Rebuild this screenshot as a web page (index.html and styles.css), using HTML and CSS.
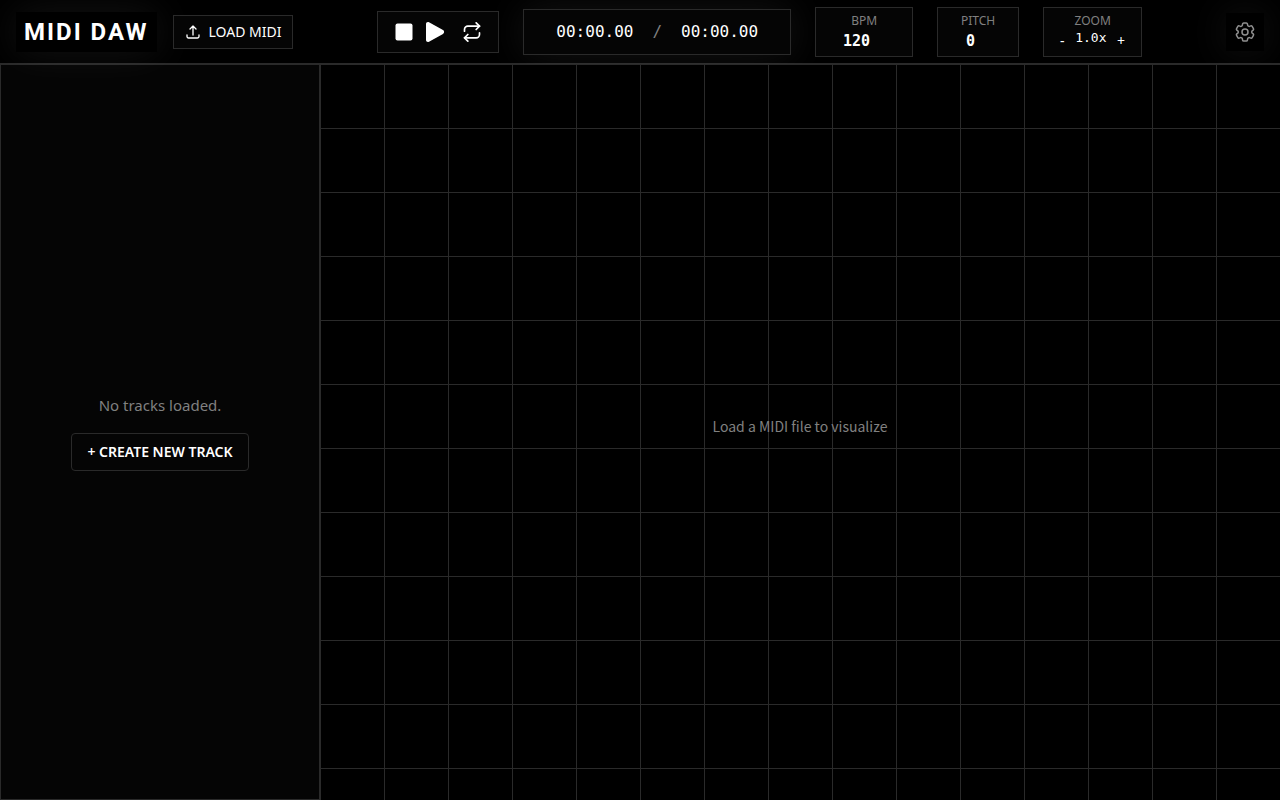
FILE: index.html
```html
<!DOCTYPE html>
<html lang="en">
<head>
	<meta charset="UTF-8">
	<meta name="viewport" content="width=device-width, initial-scale=1">
	<title>MIDI DAW</title>
	<link rel="stylesheet" href="styles.css">
</head>
<body>
<div class="app">
	<header class="header">
		<div class="header-left">
			<h1 class="logo">MIDI DAW</h1>
			<button type="button" class="load-btn">
				<svg class="icon-sm" viewBox="0 0 24 24"><path d="M3 16.5v2.25A2.25 2.25 0 0 0 5.25 21h13.5A2.25 2.25 0 0 0 21 18.75V16.5M7.5 7.5 12 3m0 0 4.5 4.5M12 3v13.5"/></svg>
				LOAD MIDI
			</button>
		</div>

		<div class="header-center">
			<!-- transport -->
			<div class="panel transport">
				<button type="button" class="stop" aria-label="Stop">
					<svg class="solid" viewBox="0 0 24 24"><rect x="3.5" y="3.5" width="17" height="17" rx="2"/></svg>
				</button>
				<button type="button" class="play" aria-label="Play">
					<svg class="solid" viewBox="0 0 24 24"><path d="M2 4c0-1.500 1.500-2.500 3-1.700l14 7.800c1.500.8 1.500 3 0 3.800l-14 7.800C3.500 22.500 2 21.500 2 20z"/></svg>
				</button>
				<button type="button" class="loop" aria-label="Loop">
					<svg class="icon-loop" viewBox="0 0 24 24"><path d="m17 1 4 4-4 4"/><path d="M3 11V9a4 4 0 0 1 4-4h14"/><path d="m7 23-4-4 4-4"/><path d="M21 13v2a4 4 0 0 1-4 4H3"/></svg>
				</button>
			</div>

			<div class="panel time">
				<span>00:00.00</span>
				<span class="slash">/</span>
				<span>00:00.00</span>
			</div>

			<div class="panel field">
				<label for="bpm">BPM</label>
				<input id="bpm" class="num" type="text" inputmode="numeric" value="120">
			</div>
			<div class="panel field">
				<label for="pitch">PITCH</label>
				<input id="pitch" class="num num-short" type="text" inputmode="numeric" value="0">
			</div>
			<div class="panel field">
				<span class="label">ZOOM</span>
				<div class="zoom">
					<button type="button" aria-label="Zoom out">-</button>
					<span class="zoom-value">1.0x</span>
					<button type="button" aria-label="Zoom in">+</button>
				</div>
			</div>
		</div>

		<button type="button" class="settings" aria-label="Settings">
			<svg viewBox="0 0 24 24"><path d="M9.594 3.940c.09-.542.560-.940 1.110-.940h2.593c.55 0 1.020.398 1.110.940l.213 1.281c.063.374.313.686.645.870.074.040.147.083.220.127.325.196.720.257 1.075.124l1.217-.456a1.125 1.125 0 0 1 1.370.490l1.296 2.247a1.125 1.125 0 0 1-.260 1.431l-1.003.827c-.293.241-.438.613-.430.992a7.723 7.723 0 0 1 0 .255c-.008.378.137.750.430.991l1.004.827c.424.350.534.955.260 1.430l-1.298 2.247a1.125 1.125 0 0 1-1.369.491l-1.217-.456c-.355-.133-.750-.072-1.076.124a6.470 6.470 0 0 1-.220.128c-.331.183-.581.495-.644.869l-.213 1.281c-.090.543-.560.940-1.110.940h-2.594c-.550 0-1.019-.398-1.110-.940l-.213-1.281c-.062-.374-.312-.686-.644-.870a6.520 6.520 0 0 1-.220-.127c-.325-.196-.720-.257-1.076-.124l-1.217.456a1.125 1.125 0 0 1-1.369-.490l-1.297-2.247a1.125 1.125 0 0 1 .260-1.431l1.004-.827c.292-.240.437-.613.430-.991a6.932 6.932 0 0 1 0-.255c.007-.380-.138-.751-.430-.992l-1.004-.827a1.125 1.125 0 0 1-.260-1.430l1.297-2.247a1.125 1.125 0 0 1 1.370-.491l1.216.456c.356.133.751.072 1.076-.124.072-.044.146-.086.220-.128.332-.183.582-.495.644-.869l.214-1.280Z"/><path d="M15 12a3 3 0 1 1-6 0 3 3 0 0 1 6 0Z"/></svg>
		</button>
	</header>

	<div class="workspace">
		<aside class="sidebar">
			<p class="empty">No tracks loaded.</p>
			<button type="button" class="create-btn">+ CREATE NEW TRACK</button>
		</aside>
		<main class="roll">
			<p class="hint">Load a MIDI file to visualize</p>
		</main>
	</div>
</div>
</body>
</html>
```
FILE: styles.css
```css
* { margin: 0; padding: 0; box-sizing: border-box; }

body {
	background: #000;
	color: #fff;
	font-family: "Noto Sans", "Open Sans", sans-serif;
	font-size: 15px;
	line-height: 24px;
}
button { background: none; border: 0; color: inherit; font: inherit; cursor: pointer; }
svg { display: block; fill: none; stroke: currentColor; stroke-linecap: round; stroke-linejoin: round; }

.app { display: flex; flex-direction: column; height: 100vh; }

/* header */
.header {
	position: relative;
	z-index: 1;
	display: flex;
	align-items: center;
	justify-content: space-between;
	height: 64px;
	padding: 0 16px;
	border-bottom: 1px solid #2a2a2a;
}
.header-left { display: flex; align-items: center; gap: 16px; }
.header-center { display: flex; align-items: center; gap: 24px; }

.logo {
	padding: 4px 8px;
	background: #000;
	box-shadow: 0 0 40px rgba(255, 255, 255, .08);
	font-family: Roboto, sans-serif;
	font-size: 24px;
	font-weight: 700;
	line-height: 32px;
	letter-spacing: 2px;
}
.load-btn {
	display: flex;
	align-items: center;
	gap: 8px;
	padding: 6px 11px;
	border: 1px solid #2a2a2a;
	background: #050505;
	font-size: 14px;
	line-height: 20px;
}
.icon-sm { width: 16px; height: 16px; stroke-width: 2; }

.panel { border: 1px solid #2a2a2a; background: #050505; }

.transport { display: flex; align-items: center; gap: 8px; padding: 8px 16px 8px 14px; }
.transport .loop { padding-left: 6px; }
.transport svg { width: 24px; height: 24px; }
.transport .solid { fill: currentColor; stroke: none; }
.transport .icon-loop { width: 20px; height: 20px; stroke-width: 2; }

.time {
	display: flex;
	gap: 19px;
	padding: 10px 32px;
	box-shadow: 0 0 40px rgba(255, 255, 255, .08);
	font-family: "DejaVu Sans Mono", monospace;
	font-size: 16px;
}
.slash { color: #808080; }

.field {
	display: flex;
	flex-direction: column;
	align-items: center;
	height: 50px;
	padding: 5px 16px 0;
}
.field label, .label { color: #808080; font-size: 12px; line-height: 16px; }
.num {
	width: 64px;
	padding-right: 15px;
	border: 0;
	background: none;
	color: #fff;
	font-family: "DejaVu Sans Mono", monospace;
	font-size: 15px;
	font-weight: 700;
	line-height: 24px;
	text-align: center;
}
.num-short { width: 48px; }
.zoom { display: flex; justify-content: space-between; width: 65px; line-height: 20px; }
.zoom button { padding-top: 2px; font-size: 14px; line-height: 20px; }
.zoom-value { font-family: "DejaVu Sans Mono", monospace; font-size: 13px; line-height: 18px; }

.settings {
	padding: 7px;
	background: #000;
	box-shadow: 0 0 40px rgba(255, 255, 255, .08);
	color: #909090;
}
.settings svg { width: 24px; height: 24px; stroke-width: 1.5; }

/* tracks + piano roll */
.workspace { display: flex; flex: 1; min-height: 0; }
.sidebar {
	display: flex;
	flex: 0 0 320px;
	flex-direction: column;
	align-items: center;
	justify-content: center;
	gap: 16px;
	border: 1px solid #2a2a2a;
	background: #050505;
}
.empty { color: #808080; }
.create-btn {
	padding: 8px 15px;
	border: 1px solid #2a2a2a;
	border-radius: 4px;
	font-size: 14px;
	font-weight: 600;
	line-height: 20px;
}
/* sits above the header glow */
.roll {
	position: relative;
	z-index: 2;
	display: flex;
	flex: 1;
	align-items: center;
	justify-content: center;
	padding-bottom: 12px;
	background-color: #000;
	background-image:
		linear-gradient(to right, #2a2a2a 1px, transparent 1px),
		linear-gradient(to bottom, #2a2a2a 1px, transparent 1px);
	background-size: 64px 64px;
}
.hint { color: #808080; font-family: "Noto Sans CJK SC", sans-serif; font-size: 14px; }
```
